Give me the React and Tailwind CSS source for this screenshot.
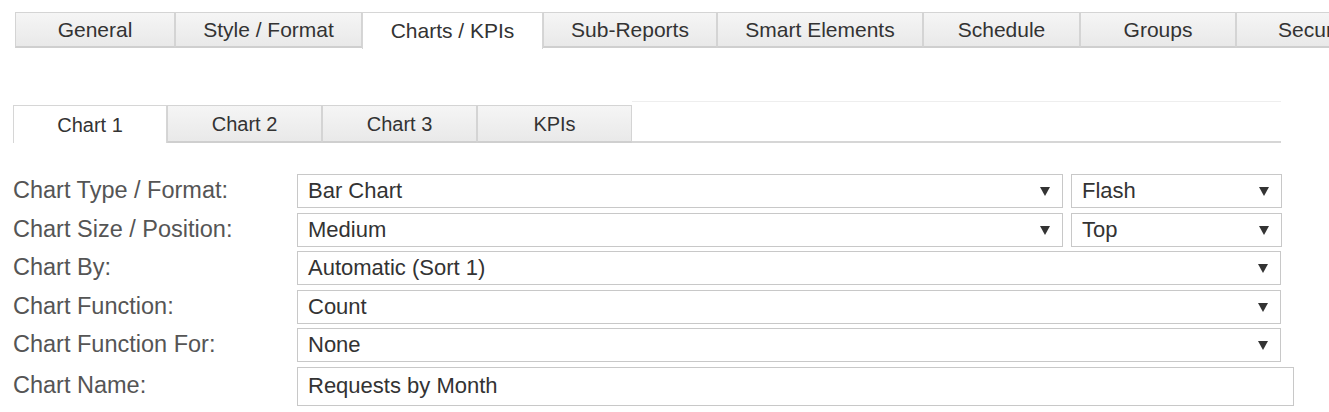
import React from 'react';

const topTabs = [
  { label: 'General', w: 160 },
  { label: 'Style / Format', w: 187 },
  { label: 'Charts / KPIs', w: 181, active: true },
  { label: 'Sub-Reports', w: 174 },
  { label: 'Smart Elements', w: 206 },
  { label: 'Schedule', w: 157 },
  { label: 'Groups', w: 156 },
  { label: 'Security', w: 160 },
];

const subTabs = [
  { label: 'Chart 1', active: true },
  { label: 'Chart 2' },
  { label: 'Chart 3' },
  { label: 'KPIs' },
];

const Arrow = () => (
  <svg width="10" height="10" viewBox="0 0 10 10" className="shrink-0">
    <polygon points="0,1 10,1 5,10" fill="#333" />
  </svg>
);

const Select = ({ value, className }) => (
  <div
    className={`flex h-full items-center justify-between border border-[#c8c8c8] bg-white pl-[10px] pr-[12px] text-[22px] text-[#333] ${className}`}
  >
    <span className="leading-none">{value}</span>
    <Arrow />
  </div>
);

const Row = ({ label, children }) => (
  <div className="flex h-[34px] items-center">
    <div className="w-[284px] shrink-0 text-[23.5px] leading-none text-[#555]">{label}</div>
    {children}
  </div>
);

export default function App() {
  return (
    <div className="h-[412px] w-[1329px] overflow-hidden bg-white font-['Liberation_Sans',Arial,sans-serif]">
      {/* main tabs */}
      <div className="flex pl-[15px] pt-[12px]">
        {topTabs.map((t) =>
          t.active ? (
            <div
              key={t.label}
              style={{ width: t.w }}
              className="flex h-[37px] shrink-0 items-center justify-center border-x border-t border-[#d6d6d6] bg-white text-[21px] text-[#333]"
            >
              {t.label}
            </div>
          ) : (
            <div
              key={t.label}
              style={{ width: t.w }}
              className="flex h-[36px] shrink-0 items-center justify-center border border-b-2 border-[#d4d4d4] border-b-[#cfcfcf] bg-gradient-to-b from-[#f5f5f5] to-[#e9e9e9] text-[21px] text-[#333]"
            >
              {t.label}
            </div>
          )
        )}
      </div>

      {/* sub tabs */}
      <div className="mt-[52px] ml-[13px] flex w-[1268px]">
        {subTabs.map((t) =>
          t.active ? (
            <div
              key={t.label}
              className="mt-[4px] flex h-[38px] w-[154px] shrink-0 items-center justify-center border-x border-t border-[#d6d6d6] bg-white text-[20px] text-[#333]"
            >
              {t.label}
            </div>
          ) : (
            <div
              key={t.label}
              className="mt-[4px] flex h-[38px] w-[155px] shrink-0 items-center justify-center border border-b-2 border-[#d4d4d4] border-b-[#cfcfcf] bg-gradient-to-b from-[#f5f5f5] to-[#e9e9e9] text-[20px] text-[#333]"
            >
              {t.label}
            </div>
          )
        )}
        <div className="flex-1 border-t border-b-2 border-t-[#eeeeee] border-b-[#d6d6d6]" />
      </div>

      {/* form */}
      <div className="mt-[31px] ml-[13px] flex flex-col gap-[4.5px]">
        <Row label="Chart Type / Format:">
          <Select value="Bar Chart" className="w-[766px]" />
          <Select value="Flash" className="ml-[8px] w-[211px]" />
        </Row>
        <Row label="Chart Size / Position:">
          <Select value="Medium" className="w-[766px]" />
          <Select value="Top" className="ml-[8px] w-[211px]" />
        </Row>
        <Row label="Chart By:">
          <Select value="Automatic (Sort 1)" className="w-[984px]" />
        </Row>
        <Row label="Chart Function:">
          <Select value="Count" className="w-[984px]" />
        </Row>
        <Row label="Chart Function For:">
          <Select value="None" className="w-[984px]" />
        </Row>
        <div className="flex h-[39px] items-center">
          <div className="w-[284px] shrink-0 text-[23.5px] leading-none text-[#555]">Chart Name:</div>
          <input
            readOnly
            value="Requests by Month"
            className="h-full w-[997px] border border-[#c8c8c8] bg-white pl-[10px] text-[22px] text-[#333] outline-none"
          />
        </div>
      </div>
    </div>
  );
}
